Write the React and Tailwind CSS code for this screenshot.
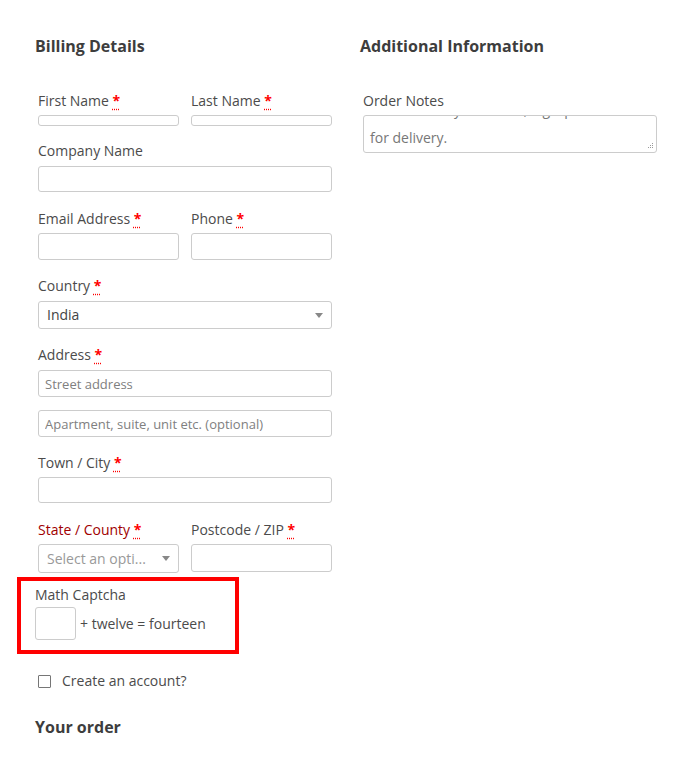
// Checkout form — billing details, order notes, math captcha
import React from 'react';

const font = { fontFamily: '"Open Sans", "Liberation Sans", sans-serif' };

function Req() {
  return (
    <abbr title="required"
      className="text-[#ff0000] font-bold underline decoration-dotted decoration-[#ff0000] underline-offset-[3px]">
      *
    </abbr>
  );
}

function Label({ children, required, className = '' }) {
  return (
    <label className={`block text-[14px] leading-[20px] text-[#4b4b4b] ${className}`}>
      {children}{required && <> <Req/></>}
    </label>
  );
}

function Input({ h = 'h-[27px]', placeholder, className = '' }) {
  return (
    <input type="text" placeholder={placeholder}
      className={`block w-full ${h} border border-[#cccccc] rounded-[3px] bg-white px-[6px]
                  text-[13px] text-[#444] placeholder:text-[#808080] outline-none ${className}`}/>
  );
}

function Caret() {
  return (
    <svg width="8" height="5" viewBox="0 0 8 5" className="flex-shrink-0">
      <path d="M0 0h8L4 5z" fill="#888"/>
    </svg>
  );
}

function FakeSelect({ value, muted, h = 'h-[28px]' }) {
  return (
    <div className={`flex items-center justify-between w-full ${h} border border-[#cccccc] rounded-[3px] bg-white pl-[8px] pr-[8px]`}>
      <span className={`text-[14px] leading-[20px] whitespace-nowrap ${muted ? 'text-[#999]' : 'text-[#444]'}`}>{value}</span>
      <Caret/>
    </div>
  );
}

export default function App() {
  return (
    <div className="min-h-[761px] w-[677px] bg-white" style={font}>
      <div className="grid grid-cols-[300px_300px] gap-x-[25px] pl-[35px] pt-[34px]">

        {/* Billing Details */}
        <div>
          <h3 className="text-[16px] leading-[24px] font-bold text-[#3d3d3d]">Billing Details</h3>

          <div className="ml-[3px] w-[294px]">
            {/* First / last name */}
            <div className="grid grid-cols-2 gap-x-[12px] mt-[33px]">
              <div>
                <Label required>First Name</Label>
                <Input h="h-[11px]" className="mt-[4px]"/>
              </div>
              <div>
                <Label required>Last Name</Label>
                <Input h="h-[11px]" className="mt-[4px]"/>
              </div>
            </div>

            <Label className="mt-[15px]">Company Name</Label>
            <Input h="h-[26px]" className="mt-[5px]"/>

            <div className="grid grid-cols-2 gap-x-[12px] mt-[17px]">
              <div>
                <Label required>Email Address</Label>
                <Input className="mt-[4px]"/>
              </div>
              <div>
                <Label required>Phone</Label>
                <Input className="mt-[4px]"/>
              </div>
            </div>

            <Label required className="mt-[16px]">Country</Label>
            <div className="mt-[5px]"><FakeSelect value="India"/></div>

            <Label required className="mt-[16px]">Address</Label>
            <Input placeholder="Street address" className="mt-[5px]"/>
            <Input placeholder="Apartment, suite, unit etc. (optional)" className="mt-[13px]"/>

            <Label required className="mt-[16px]">Town / City</Label>
            <Input h="h-[26px]" className="mt-[4px]"/>

            <div className="grid grid-cols-2 gap-x-[12px] mt-[17px]">
              <div>
                <Label required className="!text-[#a00000]">State / County</Label>
                <div className="mt-[4px]"><FakeSelect value="Select an opti..." muted h="h-[29px]"/></div>
              </div>
              <div>
                <Label required>Postcode / ZIP</Label>
                <Input h="h-[28px]" className="mt-[4px]"/>
              </div>
            </div>
          </div>

          {/* Math captcha, highlighted */}
          <div className="-ml-[18px] mt-[4px] w-[222px] border-4 border-[#ff0000] pl-[14px] pt-[4px] pb-[10px]">
            <p className="text-[14px] leading-[20px] text-[#4b4b4b]">Math Captcha</p>
            <div className="flex items-center gap-[4px] mt-[2px]">
              <input type="text" className="w-[41px] h-[33px] border border-[#cccccc] rounded-[3px] outline-none"/>
              <span className="text-[14px] text-[#4b4b4b]">+ twelve = fourteen</span>
            </div>
          </div>

          {/* Create account */}
          <div className="flex items-center ml-[3px] mt-[17px] h-[20px]">
            <span className="w-[13px] h-[13px] border border-[#767676] rounded-[1px] bg-white"/>
            <span className="ml-[11px] text-[14px] leading-[20px] text-[#4b4b4b]">Create an account?</span>
          </div>

          <h3 className="mt-[24px] text-[16px] leading-[24px] font-bold text-[#3d3d3d]">Your order</h3>
        </div>

        {/* Additional Information */}
        <div>
          <h3 className="text-[16px] leading-[24px] font-bold text-[#3d3d3d]">Additional Information</h3>
          <div className="ml-[3px] w-[294px]">
            <Label className="mt-[33px]">Order Notes</Label>
            <div className="relative mt-[4px] h-[38px] border border-[#cccccc] rounded-[3px] overflow-hidden">
              <p className="px-[6px] -mt-[20px] text-[14px] leading-[28px] text-[#777]">
                Notes about your order, e.g. special notes for delivery.
              </p>
              {/* resize grip */}
              <svg width="7" height="7" viewBox="0 0 7 7" className="absolute right-[2px] bottom-[2px]">
                <g fill="#999">
                  <rect x="5" y="0" width="1" height="1"/>
                  <rect x="3" y="2" width="1" height="1"/><rect x="5" y="2" width="1" height="1"/>
                  <rect x="1" y="4" width="1" height="1"/><rect x="3" y="4" width="1" height="1"/><rect x="5" y="4" width="1" height="1"/>
                </g>
              </svg>
            </div>
          </div>
        </div>

      </div>
    </div>
  );
}
